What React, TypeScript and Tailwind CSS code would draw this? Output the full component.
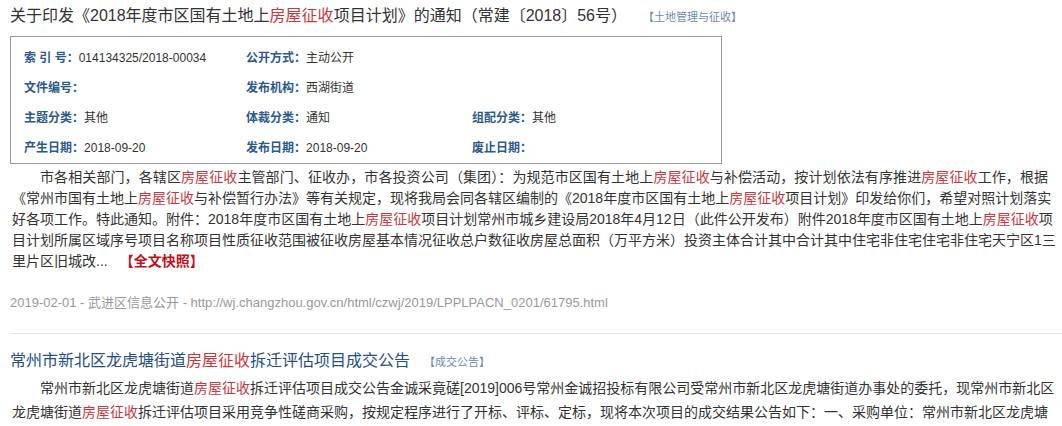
import React from 'react';

const FONT = { fontFamily: '"Liberation Sans", "Noto Sans CJK SC", sans-serif' };

// highlight keyword in red
function Hl({ children }: { children: React.ReactNode }) {
  return <span className="text-[#c9363e]">{children}</span>;
}

// one justified line of the snippet, so wraps match the original
function Line({ children, indent, last }: { children: React.ReactNode; indent?: boolean; last?: boolean }) {
  return (
    <div
      className={
        'whitespace-nowrap ' +
        (indent ? 'pl-[28px] ' : '') +
        (last ? 'text-left' : 'text-justify [text-align-last:justify]')
      }
    >
      {children}
    </div>
  );
}

function MetaItem({ label, value }: { label: string; value?: string }) {
  return (
    <div className="flex items-center text-[12px] h-[30px] whitespace-nowrap">
      <span className="font-bold text-[#2c5a8c]">{label}：</span>
      <span className="text-[#333]">{value}</span>
    </div>
  );
}

export default function App() {
  return (
    <div lang="zh-CN" className="w-[1062px] h-[426px] overflow-hidden bg-white text-[#333]" style={FONT}>
      {/* first result */}
      <div className="pl-[10px]">
        <div className="flex items-baseline leading-[32px] whitespace-nowrap">
          <span className="text-[16px] text-[#333]">
            关于印发《2018年度市区国有土地上<Hl>房屋征收</Hl>项目计划》的通知（常建〔2018〕56号）
          </span>
          <span className="ml-[16px] text-[11px] text-[#6b8bb3]">【土地管理与征收】</span>
        </div>

        <div className="mt-[3px] w-[712px] h-[128px] border border-[#9a9a9a] pl-[13px] pt-[6px]">
          <div className="grid grid-cols-[222px_226px_1fr]">
            <MetaItem label="索 引 号" value="014134325/2018-00034" />
            <MetaItem label="公开方式" value="主动公开" />
            <div />
            <MetaItem label="文件编号" />
            <MetaItem label="发布机构" value="西湖街道" />
            <div />
            <MetaItem label="主题分类" value="其他" />
            <MetaItem label="体裁分类" value="通知" />
            <MetaItem label="组配分类" value="其他" />
            <MetaItem label="产生日期" value="2018-09-20" />
            <MetaItem label="发布日期" value="2018-09-20" />
            <MetaItem label="废止日期" />
          </div>
        </div>

        <div className="mt-[3px] ml-[2px] w-[1036px] text-[14px] leading-[21px] text-[#333]">
          <Line indent>
            市各相关部门，各辖区<Hl>房屋征收</Hl>主管部门、征收办，市各投资公司（集团）：为规范市区国有土地上<Hl>房屋征收</Hl>与补偿活动，按计划依法有序推进<Hl>房屋征收</Hl>工作，根据
          </Line>
          <Line>
            《常州市国有土地上<Hl>房屋征收</Hl>与补偿暂行办法》等有关规定，现将我局会同各辖区编制的《2018年度市区国有土地上<Hl>房屋征收</Hl>项目计划》印发给你们，希望对照计划落实
          </Line>
          <Line>
            好各项工作。特此通知。附件：2018年度市区国有土地上<Hl>房屋征收</Hl>项目计划常州市城乡建设局2018年4月12日（此件公开发布）附件2018年度市区国有土地上<Hl>房屋征收</Hl>项
          </Line>
          <Line>
            目计划所属区域序号项目名称项目性质征收范围被征收房屋基本情况征收总户数征收房屋总面积（万平方米）投资主体合计其中合计其中住宅非住宅住宅非住宅天宁区1三
          </Line>
          <Line last>
            里片区旧城改...
            <span className="ml-[12px] font-bold text-[#c0111b]">【全文快照】</span>
          </Line>
        </div>

        <div className="mt-[21px] text-[13px] leading-[20px] text-[#999] whitespace-nowrap">
          2019-02-01 - 武进区信息公开 - http://wj.changzhou.gov.cn/html/czwj/2019/LPPLPACN_0201/61795.html
        </div>
      </div>

      <div className="mt-[20px] ml-[10px] border-t border-[#e6e6e6]" />

      {/* second result */}
      <div className="pl-[10px] mt-[13px]">
        <div className="flex items-baseline leading-[28px] whitespace-nowrap">
          <span className="text-[16px] text-[#244f86]">
            常州市新北区龙虎塘街道<Hl>房屋征收</Hl>拆迁评估项目成交公告
          </span>
          <span className="ml-[14px] text-[11px] text-[#6b8bb3]">【成交公告】</span>
        </div>
        <div className="ml-[2px] w-[1036px] text-[14px] leading-[24px] text-[#333]">
          <Line indent>
            常州市新北区龙虎塘街道<Hl>房屋征收</Hl>拆迁评估项目成交公告金诚采竟磋[2019]006号常州金诚招投标有限公司受常州市新北区龙虎塘街道办事处的委托，现常州市新北区
          </Line>
          <Line>
            龙虎塘街道<Hl>房屋征收</Hl>拆迁评估项目采用竞争性磋商采购，按规定程序进行了开标、评标、定标，现将本次项目的成交结果公告如下：一、采购单位：常州市新北区龙虎塘
          </Line>
        </div>
      </div>
    </div>
  );
}
